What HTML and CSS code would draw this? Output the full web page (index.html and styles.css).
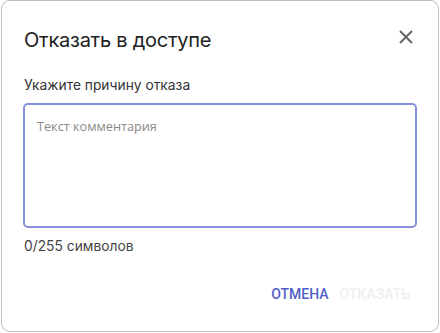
FILE: index.html
```html
<!DOCTYPE html>
<html lang="ru">
<head>
<meta charset="utf-8">
<link rel="stylesheet" href="styles.css">
</head>
<body>
<div class="dialog">
  <div class="header">
    <h1 class="title">Отказать в доступе</h1>
    <button class="close" aria-label="Закрыть">
      <svg width="14" height="14" viewBox="0 0 14 14"><path d="M1 1L13 13M13 1L1 13" stroke="#666" stroke-width="2" fill="none"/></svg>
    </button>
  </div>
  <div class="content">
    <label class="label" for="reason">Укажите причину отказа</label>
    <textarea id="reason" class="field" placeholder="Текст комментария"></textarea>
    <div class="counter">0/255 символов</div>
  </div>
  <div class="actions">
    <button class="btn btn-primary">ОТМЕНА</button>
    <button class="btn btn-disabled">ОТКАЗАТЬ</button>
  </div>
</div>
</body>
</html>
```
FILE: styles.css
```css
html, body {
  margin: 0;
  padding: 0;
  background: #fff;
}
body {
  font-family: Inter, "Noto Sans", sans-serif;
  color: #222;
}
.dialog {
  box-sizing: border-box;
  width: 438px;
  height: 332px;
  margin-left: 1px;
  border: 1px solid #bdbdbd;
  border-radius: 9px;
  display: flex;
  flex-direction: column;
  padding: 0 22px 0 22px;
}
.header {
  display: flex;
  align-items: center;
  justify-content: space-between;
  height: 40px;
  margin-top: 19px;
}
.title {
  margin: 0;
  font-size: 20px;
  font-weight: 400;
  color: #222;
  letter-spacing: -0.25px;
}
.close {
  background: none;
  border: 0;
  padding: 0;
  width: 14px;
  height: 14px;
  margin-right: 3px;
  margin-top: -6px;
  display: flex;
}
.content {
  display: flex;
  flex-direction: column;
  margin-top: 16px;
}
.label {
  font-size: 13.8px;
  color: #333;
  line-height: 18px;
}
.field {
  box-sizing: border-box;
  margin-top: 9px;
  margin-left: -1px;
  width: 394px;
  height: 125px;
  border: 2px solid #8590dc;
  border-radius: 5px;
  resize: none;
  padding: 12px 12px;
  font-family: "Open Sans", sans-serif;
  font-size: 12.7px;
  outline: none;
}
.field::placeholder {
  color: #8a8a8a;
}
.counter {
  margin-top: 9px;
  font-size: 13.8px;
  color: #444;
  line-height: 18px;
}
.actions {
  display: flex;
  justify-content: flex-end;
  gap: 11px;
  margin-top: 31px;
  padding-right: 6px;
}
.btn {
  background: none;
  border: 0;
  padding: 0;
  font-family: Roboto, sans-serif;
  font-size: 14px;
  font-weight: 500;
}
.btn-primary {
  color: #5160c6;
}
.btn-disabled {
  color: #efefef;
}
```
